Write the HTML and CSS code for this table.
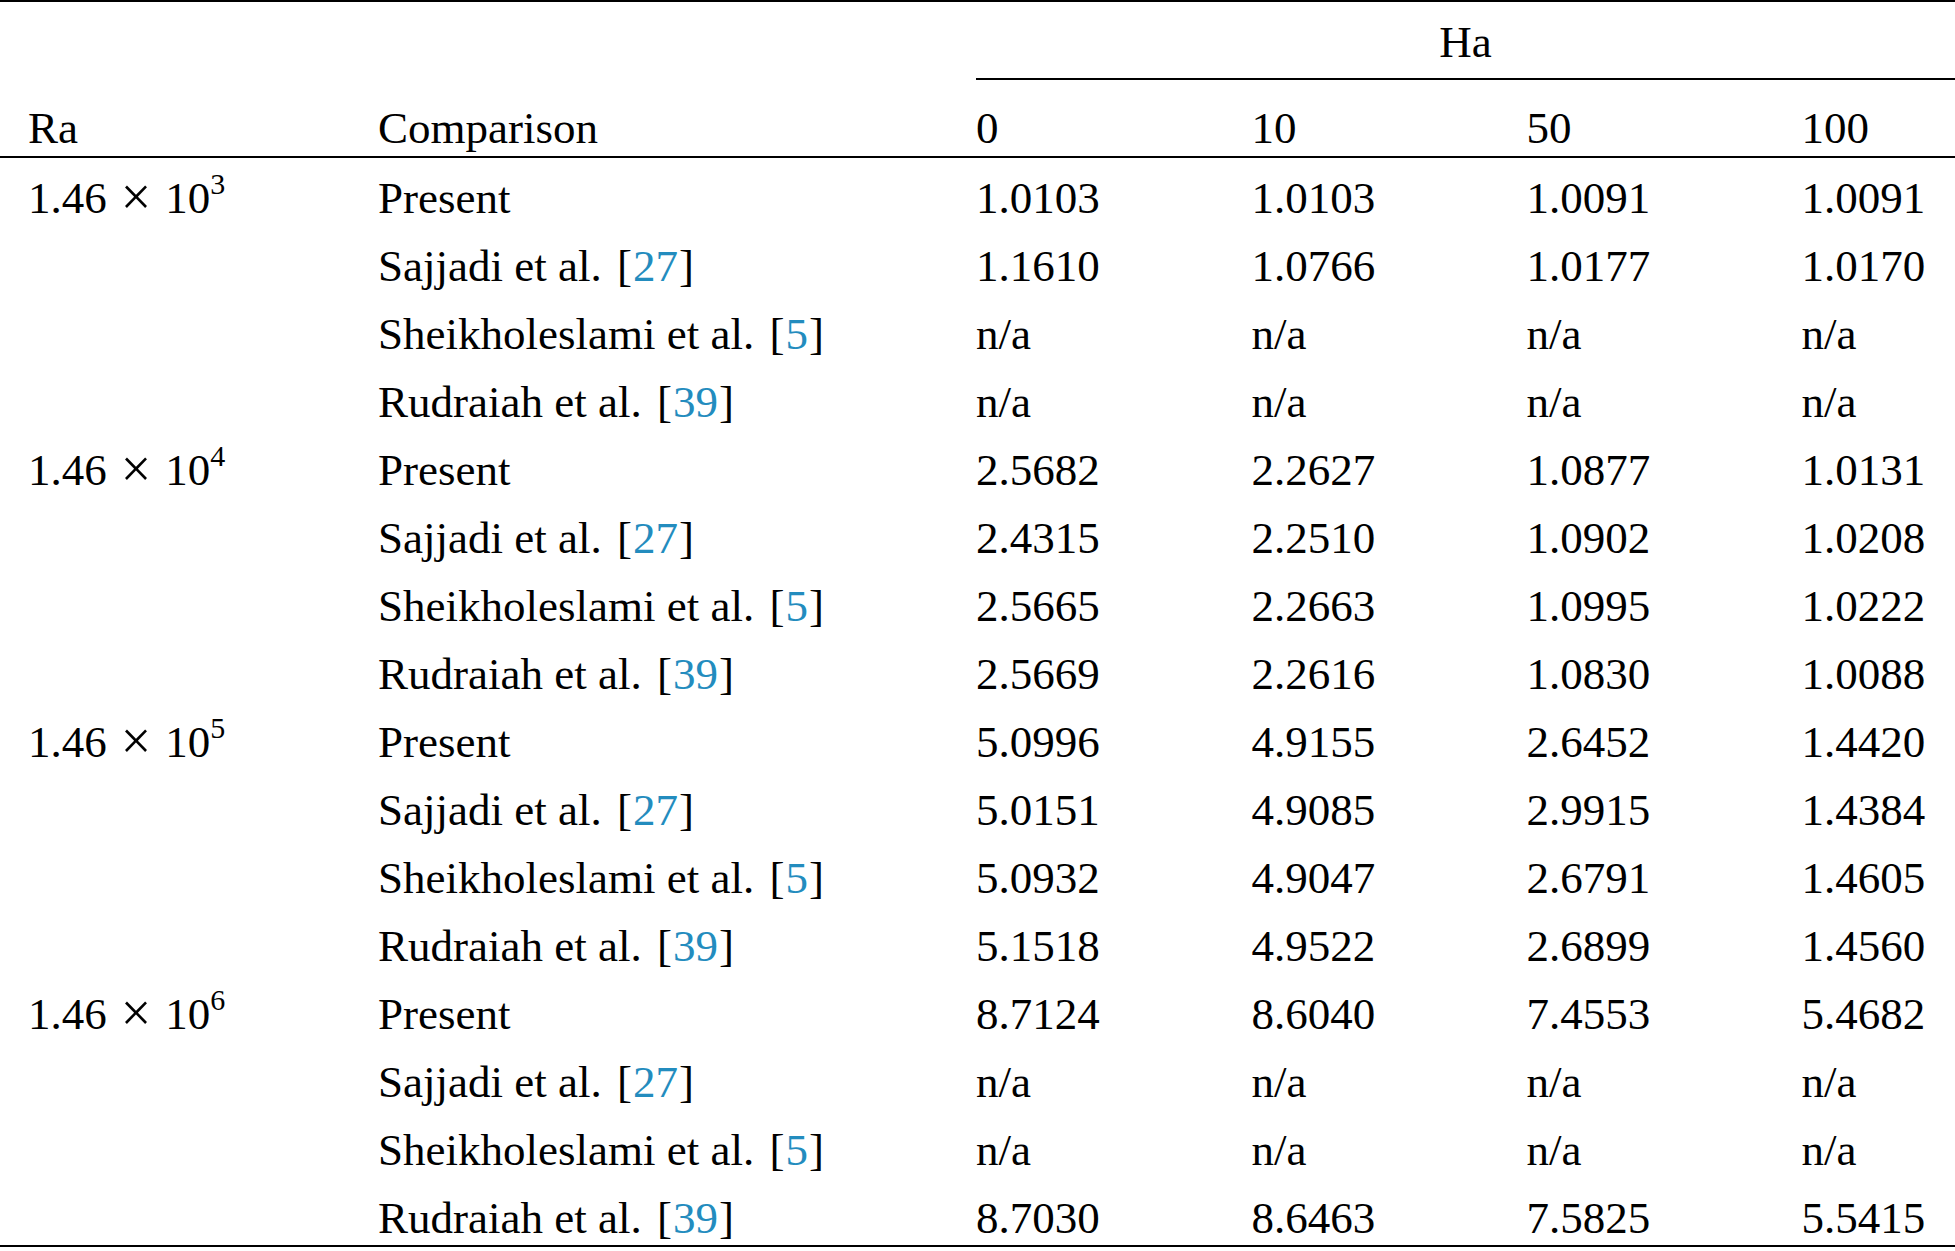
FILE: index.html
```html
<!DOCTYPE html>
<html lang="en">
<head>
<meta charset="utf-8">
<title>Comparison of Nusselt number</title>
<link rel="stylesheet" href="styles.css">
</head>
<body>
<table class="results">
  <colgroup>
    <col class="col-ra">
    <col class="col-cmp">
    <col class="col-v1">
    <col class="col-v2">
    <col class="col-v3">
    <col class="col-last">
  </colgroup>
  <thead>
    <tr class="group-row">
      <th class="ra"></th>
      <th></th>
      <th colspan="4" class="group">Ha</th>
    </tr>
    <tr class="head-row">
      <th class="ra">Ra</th>
      <th>Comparison</th>
      <th>0</th>
      <th>10</th>
      <th>50</th>
      <th>100</th>
    </tr>
  </thead>
  <tbody>
    <tr><td class="ra">1.46<span class="times">×</span>10<sup>3</sup></td><td>Present</td><td>1.0103</td><td>1.0103</td><td>1.0091</td><td>1.0091</td></tr>
    <tr><td class="ra"></td><td>Sajjadi et al. <span class="br">[</span><span class="ref">27</span>]</td><td>1.1610</td><td>1.0766</td><td>1.0177</td><td>1.0170</td></tr>
    <tr><td class="ra"></td><td>Sheikholeslami et al. <span class="br">[</span><span class="ref">5</span>]</td><td>n/a</td><td>n/a</td><td>n/a</td><td>n/a</td></tr>
    <tr><td class="ra"></td><td>Rudraiah et al. <span class="br">[</span><span class="ref">39</span>]</td><td>n/a</td><td>n/a</td><td>n/a</td><td>n/a</td></tr>
    <tr><td class="ra">1.46<span class="times">×</span>10<sup>4</sup></td><td>Present</td><td>2.5682</td><td>2.2627</td><td>1.0877</td><td>1.0131</td></tr>
    <tr><td class="ra"></td><td>Sajjadi et al. <span class="br">[</span><span class="ref">27</span>]</td><td>2.4315</td><td>2.2510</td><td>1.0902</td><td>1.0208</td></tr>
    <tr><td class="ra"></td><td>Sheikholeslami et al. <span class="br">[</span><span class="ref">5</span>]</td><td>2.5665</td><td>2.2663</td><td>1.0995</td><td>1.0222</td></tr>
    <tr><td class="ra"></td><td>Rudraiah et al. <span class="br">[</span><span class="ref">39</span>]</td><td>2.5669</td><td>2.2616</td><td>1.0830</td><td>1.0088</td></tr>
    <tr><td class="ra">1.46<span class="times">×</span>10<sup>5</sup></td><td>Present</td><td>5.0996</td><td>4.9155</td><td>2.6452</td><td>1.4420</td></tr>
    <tr><td class="ra"></td><td>Sajjadi et al. <span class="br">[</span><span class="ref">27</span>]</td><td>5.0151</td><td>4.9085</td><td>2.9915</td><td>1.4384</td></tr>
    <tr><td class="ra"></td><td>Sheikholeslami et al. <span class="br">[</span><span class="ref">5</span>]</td><td>5.0932</td><td>4.9047</td><td>2.6791</td><td>1.4605</td></tr>
    <tr><td class="ra"></td><td>Rudraiah et al. <span class="br">[</span><span class="ref">39</span>]</td><td>5.1518</td><td>4.9522</td><td>2.6899</td><td>1.4560</td></tr>
    <tr><td class="ra">1.46<span class="times">×</span>10<sup>6</sup></td><td>Present</td><td>8.7124</td><td>8.6040</td><td>7.4553</td><td>5.4682</td></tr>
    <tr><td class="ra"></td><td>Sajjadi et al. <span class="br">[</span><span class="ref">27</span>]</td><td>n/a</td><td>n/a</td><td>n/a</td><td>n/a</td></tr>
    <tr><td class="ra"></td><td>Sheikholeslami et al. <span class="br">[</span><span class="ref">5</span>]</td><td>n/a</td><td>n/a</td><td>n/a</td><td>n/a</td></tr>
    <tr><td class="ra"></td><td>Rudraiah et al. <span class="br">[</span><span class="ref">39</span>]</td><td>8.7030</td><td>8.6463</td><td>7.5825</td><td>5.5415</td></tr>
  </tbody>
</table>
</body>
</html>
```

FILE: styles.css
```css
html, body {
  margin: 0;
  padding: 0;
  background: #ffffff;
}

body {
  font-family: "Liberation Serif", "Times New Roman", serif;
  font-size: 45px;
  color: #000000;
}

.results {
  width: 1955px;
  table-layout: fixed;
  border-collapse: separate;
  border-spacing: 0;
  border-top: 2px solid #000;
  border-bottom: 2px solid #000;
}

.col-ra { width: 378px; }
.col-cmp { width: 598px; }
.col-v1 { width: 275.5px; }
.col-v2 { width: 275px; }
.col-v3 { width: 275px; }
.col-last { width: 153.5px; }

.results th,
.results td {
  padding: 0;
  text-align: left;
  font-weight: normal;
  line-height: 50px;
  white-space: nowrap;
  vertical-align: top;
}

.results .ra {
  padding-left: 28px;
}

.group-row th {
  padding-top: 15px;
  padding-bottom: 11px;
}

.group-row .group {
  text-align: center;
  border-bottom: 2px solid #000;
}

.head-row th {
  padding-top: 22.5px;
  padding-bottom: 3.5px;
  border-bottom: 2px solid #000;
}

.results tbody td {
  padding-top: 15px;
  padding-bottom: 3px;
}

.results tbody tr:last-child td {
  padding-bottom: 1.5px;
}

.times {
  font-size: 54px;
  line-height: 0;
  margin: 0 14px;
  vertical-align: -2px;
}

.results sup {
  font-size: 30px;
  line-height: 0;
  vertical-align: 19px;
}

.br {
  margin-left: 4px;
}

.ref {
  color: #238cbe;
  padding: 0 1px;
}
```
